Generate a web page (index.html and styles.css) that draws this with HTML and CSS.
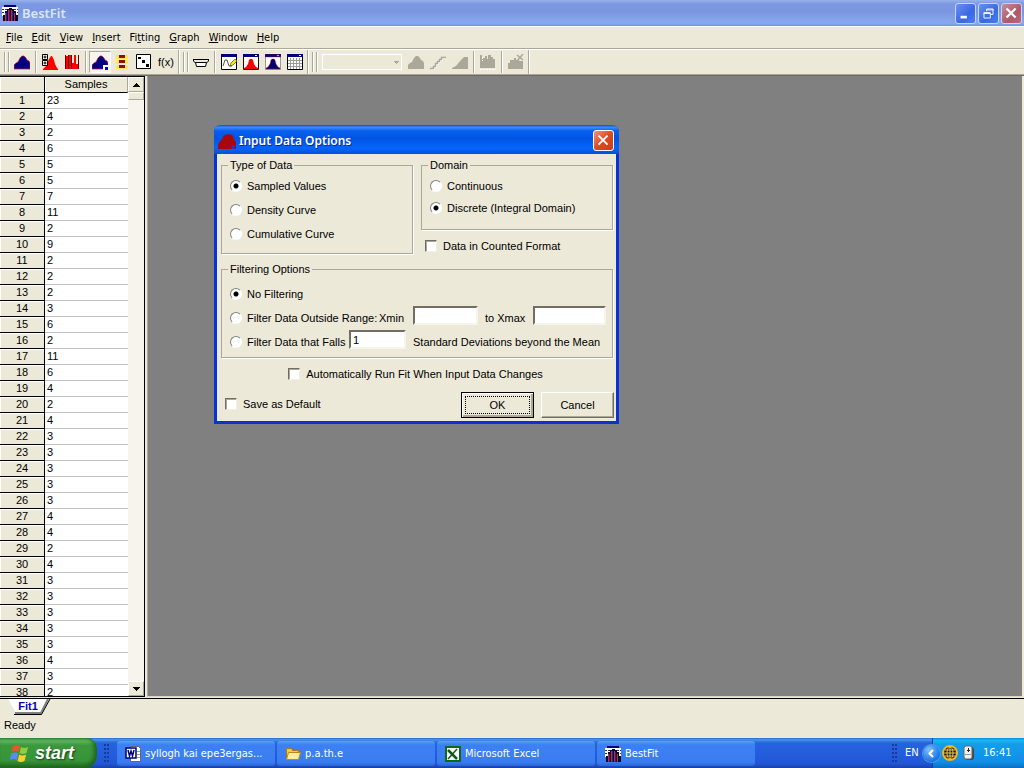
FILE: index.html
```html
<!DOCTYPE html>
<html lang="en">
<head>
<meta charset="utf-8">
<title>BestFit</title>
<link rel="stylesheet" href="styles.css">
</head>
<body>
<svg class="defs" aria-hidden="true">
  <defs>
    <symbol id="app" viewBox="0 0 16 16"><path fill="#fff" d="M0 2h16v9H0z"/><path fill="#00007c" d="M2 0h12v2H2z"/><path stroke="#222b70" stroke-dasharray="2 1" d="M0 4.500h16M0 7.500h16"/><path fill="#080828" d="M1 16v-6h2V6h2V4h2V3h3v1h2v2h2v4h2v6z"/><path fill="#e01c30" d="M3 8h1v8H3zM6 5h1v11H6zM9 5h1v11H9zM12 8h1v8h-1z"/><path fill="#22229c" d="M4 8h1v8H4zM7 5h1v11H7zM10 6h1v10h-1z"/></symbol>
    <symbol id="hill" viewBox="0 0 16 16"><path d="M0 15v-4l2-2 2-1 2-4 2-2h2l2 2 1 2 2 1 1 2v6z"/></symbol>
    <symbol id="bell" viewBox="0 0 16 16"><path fill="#fff" stroke="#111" d="M.5 1.500h15v14H.5z"/><path fill="#00007c" d="M0 0h16v3H0z"/><path fill="#fff" d="M12 1h2v1h-2z"/><path d="M1 15v-1l2-1 2-3 1-4 1-1h2l1 1 1 4 2 3 2 1v1z"/></symbol>
  </defs>
</svg>

<header class="titlebar">
  <svg class="i16"><use href="#app"/></svg>
  <h1>BestFit</h1>
  <button class="cap" aria-label="Minimize"><svg viewBox="0 0 21 21"><path fill="#fff" d="M5 13h7v3H5z"/></svg></button>
  <button class="cap" aria-label="Restore"><svg viewBox="0 0 21 21"><path fill="none" stroke="#fff" d="M8.500 8V5.500h7v6H13M8 6.500h8M5.500 9.500h7v6h-7zM5 10.500h8"/></svg></button>
  <button class="cap faded" aria-label="Close"><svg viewBox="0 0 21 21"><path stroke="#fff" stroke-width="2.500" d="M5 5l10 10M15 5L5 15"/></svg></button>
</header>

<nav class="menubar">
  <button><u>F</u>ile</button><button><u>E</u>dit</button><button><u>V</u>iew</button><button><u>I</u>nsert</button><button>Fi<u>t</u>ting</button><button><u>G</u>raph</button><button><u>W</u>indow</button><button><u>H</u>elp</button>
</nav>

<div class="toolbar">
  <div class="group">
    <i class="handle"></i>
    <button aria-label="Input data"><svg class="i16" fill="#000084" stroke="#d01830" stroke-width=".7"><use href="#hill"/></svg></button>
    <i class="sep"></i>
    <button aria-label="Run fit options"><svg class="i16" viewBox="0 0 16 16"><path fill="#f00" d="M1 16v-1l3-3 3-7 2-3h1l2 4 1 4 2 4 1 1v1z"/><path fill="#fff" stroke="#000" d="M.5.500h5v5h-5zM.5 6.500h5v5h-5z"/><circle cx="3" cy="3" r="1" fill="none" stroke="#000"/><circle cx="3" cy="9" r="1" fill="none" stroke="#000"/></svg></button>
    <button aria-label="Fit results"><svg class="i16" viewBox="0 0 16 16"><path fill="#f00" d="M1 2h3V1h4v8h2V1h2v9h3v5H1z"/><path stroke="#700000" d="M1.500 1v14M4.500 1v14M7.500 1v14M14.500 1v14"/></svg></button>
    <i class="sep"></i>
    <button class="down" aria-label="Input data options"><svg class="i16" viewBox="0 0 16 16"><use href="#hill" fill="#000084" stroke="#d01830" stroke-width=".7"/><path fill="#fff" d="M11 11h5v5h-5z"/><path fill="#0000d0" d="M13 13h3v3h-3z"/></svg></button>
    <button aria-label="Distributions"><svg class="i16" viewBox="0 0 16 16"><path fill="#ffe65c" d="M2 1h12v4H2zM2 6h12v4H2zM2 11h12v4H2z"/><path fill="#8c1010" d="M5 1h6v3H5zM5 6h6v3H5zM5 11h6v3H5z"/></svg></button>
    <button aria-label="Random sample"><svg class="i16" viewBox="0 0 16 16"><path fill="#fff" stroke="#000" d="M.5.500h14v14H.5z"/><path d="M2 3h3v2H2zM6 6h3v3H6zM10 10h3v3h-3z"/></svg></button>
    <button class="fx" aria-label="Function">f(x)</button>
  </div>
  <div class="group">
    <i class="handle"></i>
    <button aria-label="Flip"><svg class="i16" viewBox="0 0 16 16"><path fill="none" stroke="#000" d="M0 5.500h16M.5 5v2l2 2M15.500 5v2l-2 2"/><path fill="#fff" stroke="#000" d="M3.500 12.500L2.500 8.500h11l-1 4z"/></svg></button>
    <i class="sep"></i>
    <button aria-label="Edit graph"><svg class="i16" viewBox="0 0 16 16"><path fill="#fff" stroke="#000" d="M.5 1.500h15v14H.5z"/><path fill="#00007c" d="M0 0h16v3H0z"/><path fill="none" stroke="#555" d="M2 12l2-6h2l2 6h3"/><path fill="#ffe600" stroke="#333" stroke-width=".6" d="M9 12l1-3 4-4 2 2-4 4z"/></svg></button>
    <button aria-label="Red graph"><svg class="i16" fill="#f00"><use href="#bell"/></svg></button>
    <button aria-label="Blue graph"><svg class="i16" fill="#000070" stroke="#c01838" stroke-width=".4"><use href="#bell"/></svg></button>
    <button aria-label="Grid"><svg class="i16" viewBox="0 0 16 16"><path fill="#fff" stroke="#000" d="M.5 1.500h15v14H.5z"/><path stroke="#9a9a9a" d="M3.500 4v11M6.500 4v11M9.500 4v11M12.500 4v11M1 6.500h14M1 9.500h14M1 12.500h14"/><path fill="#00007c" d="M0 0h16v3H0z"/><path fill="#fff" d="M12 1h2v1h-2z"/></svg></button>
  </div>
  <div class="group">
    <i class="handle"></i>
    <select class="combo" aria-label="Distribution" disabled><option></option></select>
    <button disabled aria-label="Density"><svg class="i16" fill="#aca899"><use href="#hill"/></svg></button>
    <button disabled aria-label="Line"><svg class="i16" viewBox="0 0 16 16"><path fill="none" stroke="#fff" d="M1 15.500h3.500v-2h2v-3h2v-2h2v-2h2v-2H16"/><path fill="none" stroke="#aca899" stroke-width="1.500" d="M0 14.500h3.500v-2h2v-3h2v-2h2v-2h2v-2H16"/></svg></button>
    <button disabled aria-label="Cumulative"><svg class="i16" viewBox="0 0 16 16"><path fill="#aca899" d="M0 15v-1l4-2 5-6 3-3h4v12z"/></svg></button>
    <i class="sep"></i>
    <button disabled aria-label="Comparison"><svg class="i16" viewBox="0 0 16 16"><path fill="#aca899" d="M0 14V1h2v4h1V4h2V2h2v3h1V1h3v2h2v2h2v9z"/><path stroke="#fff" stroke-dasharray="2 1" d="M0 15.500h16M2.500 3v4"/></svg></button>
    <i class="sep"></i>
    <button disabled aria-label="Clear"><svg class="i16" viewBox="0 0 16 16"><path fill="#aca899" d="M0 15V9h2V6h4V4h2v2h2l2 1h3v8z"/><path stroke="#aca899" stroke-width="1.500" d="M9 1l6 5M15 0L9 7"/></svg></button>
  </div>
</div>

<main class="workspace">
  <section class="sheet">
    <div class="rows">
      <table>
        <thead><tr><th class="corner"></th><th>Samples</th></tr></thead>
        <tbody>
          <tr><th>1</th><td>23</td></tr>
          <tr><th>2</th><td>4</td></tr>
          <tr><th>3</th><td>2</td></tr>
          <tr><th>4</th><td>6</td></tr>
          <tr><th>5</th><td>5</td></tr>
          <tr><th>6</th><td>5</td></tr>
          <tr><th>7</th><td>7</td></tr>
          <tr><th>8</th><td>11</td></tr>
          <tr><th>9</th><td>2</td></tr>
          <tr><th>10</th><td>9</td></tr>
          <tr><th>11</th><td>2</td></tr>
          <tr><th>12</th><td>2</td></tr>
          <tr><th>13</th><td>2</td></tr>
          <tr><th>14</th><td>3</td></tr>
          <tr><th>15</th><td>6</td></tr>
          <tr><th>16</th><td>2</td></tr>
          <tr><th>17</th><td>11</td></tr>
          <tr><th>18</th><td>6</td></tr>
          <tr><th>19</th><td>4</td></tr>
          <tr><th>20</th><td>2</td></tr>
          <tr><th>21</th><td>4</td></tr>
          <tr><th>22</th><td>3</td></tr>
          <tr><th>23</th><td>3</td></tr>
          <tr><th>24</th><td>3</td></tr>
          <tr><th>25</th><td>3</td></tr>
          <tr><th>26</th><td>3</td></tr>
          <tr><th>27</th><td>4</td></tr>
          <tr><th>28</th><td>4</td></tr>
          <tr><th>29</th><td>2</td></tr>
          <tr><th>30</th><td>4</td></tr>
          <tr><th>31</th><td>3</td></tr>
          <tr><th>32</th><td>3</td></tr>
          <tr><th>33</th><td>3</td></tr>
          <tr><th>34</th><td>3</td></tr>
          <tr><th>35</th><td>3</td></tr>
          <tr><th>36</th><td>4</td></tr>
          <tr><th>37</th><td>3</td></tr>
          <tr><th>38</th><td>2</td></tr>
        </tbody>
      </table>
    </div>
    <div class="scrollbar">
      <button aria-label="Scroll up"><svg viewBox="0 0 7 4"><path d="M3 0h1v1h1v1h1v1h1v1H0V3h1V2h1V1h1z"/></svg></button>
      <div class="thumb"></div>
      <button class="last" aria-label="Scroll down"><svg viewBox="0 0 7 4"><path d="M0 0h7v1H6v1H5v1H4v1H3V3H2V2H1V1H0z"/></svg></button>
    </div>
  </section>

  <div class="desk">
    <form class="dialog" role="dialog" aria-labelledby="dlg">
      <div class="dialog-title">
        <svg class="i18" viewBox="0 0 16 16"><path fill="#a8080c" d="M0 15v-4l2-3 2-2 1-3 3-1h3l2 1 1 3 2 3v6z"/><path fill="#1c3cd8" d="M12 12h3v3h-3z"/></svg>
        <h2 id="dlg">Input Data Options</h2>
        <button type="button" class="cap red" aria-label="Close"><svg viewBox="0 0 21 21"><path stroke="#fff" stroke-width="2" d="M5 5l10 10M15 5L5 15"/></svg></button>
      </div>
      <div class="dialog-body">
        <div class="top">
          <fieldset class="type">
            <legend>Type of Data</legend>
            <label class="row"><input type="radio" name="type" checked>Sampled Values</label>
            <label class="row"><input type="radio" name="type">Density Curve</label>
            <label class="row"><input type="radio" name="type">Cumulative Curve</label>
          </fieldset>
          <div class="col">
            <fieldset class="domain">
              <legend>Domain</legend>
              <label class="row"><input type="radio" name="domain">Continuous</label>
              <label class="row"><input type="radio" name="domain" checked>Discrete (Integral Domain)</label>
            </fieldset>
            <label class="row check"><input type="checkbox">Data in Counted Format</label>
          </div>
        </div>
        <fieldset class="filter">
          <legend>Filtering Options</legend>
          <label class="row"><input type="radio" name="filter" checked>No Filtering</label>
          <div class="row">
            <label class="row range"><input type="radio" name="filter">Filter Data Outside Range:</label>
            <label for="xmin" class="xmin">Xmin</label><input type="text" id="xmin">
            <label for="xmax" class="xmax">to Xmax</label><input type="text" id="xmax" class="wide">
          </div>
          <div class="row">
            <label class="row falls"><input type="radio" name="filter">Filter Data that Falls</label>
            <input type="text" id="dev" class="dev" value="1"><label for="dev">Standard Deviations beyond the Mean</label>
          </div>
        </fieldset>
        <label class="row auto"><input type="checkbox">Automatically Run Fit When Input Data Changes</label>
        <div class="actions">
          <label class="row check"><input type="checkbox">Save as Default</label>
          <button type="button" class="push default"><span>OK</span></button>
          <button type="button" class="push">Cancel</button>
        </div>
      </div>
    </form>
  </div>
</main>

<div class="tabs">
  <button class="tab"><svg viewBox="0 0 52 17"><path fill="#fff" d="M8 0l8 14h25l8-14z"/><path fill="none" stroke="#808080" stroke-width="2" d="M15 14h26L48 0"/><path fill="none" stroke="#000" d="M14 15.500h27.500L50 0"/></svg><span>Fit1</span></button>
</div>
<div class="status">Ready</div>

<footer class="taskbar">
  <button class="start"><svg viewBox="0 0 20 20"><path fill="#e8562a" d="M3 3q4-2 7 0L8.500 9q-3-2-7 0z"/><path fill="#8ccf3c" d="M11 4q3 2 7 0l-1.500 6q-4 2-7 0z"/><path fill="#5a8cf0" d="M1.200 10.500q4-2 7 0L6.700 17q-3-2-7 0z"/><path fill="#fcd02c" d="M9.200 11.500q3 2 7 0L14.500 18q-4 2-7 0z"/></svg>start</button>
  <i class="grip"></i>
  <div class="tasks">
    <button><svg class="i16" viewBox="0 0 16 16"><path fill="#fff" stroke="#667" d="M5.500.500h8l2 2v13h-10z"/><path stroke="#99a" d="M12 5.500h3M12 8.500h3M12 11.500h3"/><path fill="#fff" stroke="#000078" stroke-width="1.500" d="M1 2h10v10H1z"/><path fill="none" stroke="#000078" stroke-width="1.500" d="M3 4l1.500 6L6 5l1.500 5L9 4"/></svg><span>syllogh kai epe3ergas...</span></button>
    <button><svg class="i16" viewBox="0 0 16 16"><path fill="#f3c84c" stroke="#a87c14" d="M1.500 13.500v-11h5l1 2h6v3"/><path fill="#ffec9c" stroke="#b88a1c" d="M1.500 13.500l2-7h12l-2 7z"/></svg><span>p.a.th.e</span></button>
    <button><svg class="i16" viewBox="0 0 16 16"><path fill="#0c6a1c" d="M0 0h16v16H0z"/><path fill="#fff" d="M2 2h12v12H2z"/><path stroke="#0c5a1c" stroke-width="2.500" d="M3 4l9 9"/><path stroke="#0c5a1c" stroke-width="1.500" d="M12 3l-9 10"/></svg><span>Microsoft Excel</span></button>
    <button><svg class="i16"><use href="#app"/></svg><span>BestFit</span></button>
  </div>
  <i class="grip"></i>
  <span class="lang">EN</span>
  <div class="tray">
    <button class="chev" aria-label="Show hidden icons"><svg viewBox="0 0 17 17"><path fill="none" stroke="#fff" stroke-width="2" d="M10 5L6.500 8.500 10 12"/></svg></button>
    <svg class="i16" viewBox="0 0 16 16"><circle cx="8" cy="8" r="7" fill="#111" stroke="#f0b428" stroke-width="2"/><path fill="none" stroke="#f4c850" d="M2 8h12M3 5h10M3 11h10M8 2v12"/><ellipse cx="8" cy="8" rx="3" ry="6" fill="none" stroke="#f4c850"/></svg>
    <svg class="i16" viewBox="0 0 16 16"><rect x="5" y="2" width="9" height="13" rx="3" fill="#444"/><rect x="4" y="1" width="8" height="13" rx="2" fill="#eee" stroke="#666"/><path stroke="#222" d="M8.500 3v4M7 5.500h3"/><path stroke="#999" d="M5 9.500h6"/></svg>
    <time>16:41</time>
  </div>
</footer>
</body>
</html>
```

FILE: styles.css
```css
* { box-sizing: border-box; }

body {
  margin: 0;
  height: 100vh;
  display: flex;
  flex-direction: column;
  overflow: hidden;
  background: #ece9d8;
  color: #000;
  font: 11px/14px "Liberation Sans", Arial, sans-serif;
}

button { font: inherit; color: inherit; margin: 0; padding: 0; border: 0; background: none; }
svg { display: block; flex: none; }
h1, h2 { margin: 0; flex: 1; font: 600 13px/20px "Noto Sans", "Open Sans", sans-serif; }
.defs { position: absolute; width: 0; height: 0; }
.i16 { width: 16px; height: 16px; }
.i18 { width: 18px; height: 18px; }

/* Title bar */
.titlebar {
  display: flex;
  align-items: center;
  gap: 2px;
  height: 26px;
  flex: none;
  padding: 0 2px;
  background: linear-gradient(#98b2ee 0, #7c98e2 15%, #7a96df 45%, #84a5ea 75%, #86a8ee 90%, #7490dc);
}
.titlebar h1 { padding-left: 2px; color: #dce6fa; }
.cap {
  width: 21px;
  height: 21px;
  flex: none;
  border: 1px solid #c4d4f8;
  border-radius: 3px;
  background: linear-gradient(135deg, #6a90f0, #3a68e4 60%, #4c7cf0);
}
.cap svg { width: 19px; height: 19px; }
.cap.faded { background: linear-gradient(135deg, #c88c98, #b05868 60%, #bc6878); }
.cap.red { border-color: #fff; background: linear-gradient(135deg, #f09478, #dc4c24 50%, #c83c14); }

/* Menu */
.menubar {
  display: flex;
  gap: 9px;
  flex: none;
  height: 23px;
  padding: 1px 6px 0;
  border-top: 1px solid #fff;
  border-bottom: 1px solid #aca899;
  font: 11px/20px "DejaVu Sans Condensed", "DejaVu Sans", sans-serif;
}

/* Toolbar */
.toolbar { display: flex; flex: none; height: 26px; border-top: 1px solid #fff; border-bottom: 1px solid #aca899; }
.group {
  display: flex;
  align-items: center;
  padding: 0 1px 0 4px;
  border-right: 1px solid #aca899;
  box-shadow: 1px 0 #fff;
}
.group button { display: grid; place-items: center; width: 22px; height: 22px; }
.group .down { background: #f6f4ec; border: 1px solid; border-color: #aca899 #fff #fff #aca899; }
.handle {
  width: 5px;
  height: 20px;
  margin-right: 2px;
  border: solid #aca899;
  border-width: 0 1px;
  box-shadow: inset 1px 0 #fff, 1px 0 #fff;
}
.sep { width: 2px; height: 22px; margin: 0 2px; border-left: 1px solid #aca899; border-right: 1px solid #fff; }
.combo {
  appearance: none;
  width: 80px;
  height: 16px;
  margin: 0 3px;
  border: 1px solid #fff;
  border-radius: 0;
  opacity: 1;
  background: linear-gradient(#aca899, #aca899) 71px 6px / 5px 1px no-repeat, linear-gradient(#aca899, #aca899) 72px 7px / 3px 1px no-repeat, linear-gradient(#aca899, #aca899) 73px 8px / 1px 1px no-repeat, #ece9d8;
}

/* Workspace */
.workspace { display: flex; flex: 1; min-height: 0; border-top: 1px solid #6c6a60; }
.sheet { display: flex; width: 145px; flex: none; border: 1px solid #000; border-left: 0; }
.rows { flex: 1; min-width: 0; overflow: hidden; }
table { width: 100%; table-layout: fixed; border-collapse: separate; border-spacing: 0; }
th, td { height: 16px; padding: 0; line-height: 15px; font-weight: normal; }
th { border-right: 1px solid #000; border-bottom: 1px solid #000; background: #ece9d8; box-shadow: inset 1px 1px #fff; }
thead th { border-right-color: #aca899; }
thead .corner { width: 45px; border-right-color: #000; }
td { padding-left: 2px; background: #fff; border-bottom: 1px solid #c0c0c0; }

.scrollbar { display: flex; flex-direction: column; width: 16px; background: #f6f4ec; }
.scrollbar button, .thumb {
  display: grid;
  place-items: center;
  height: 15px;
  background: #ece9d8;
  border: 1px solid;
  border-color: #fff #aca899 #aca899 #fff;
}
.scrollbar svg { width: 7px; height: 4px; }
.scrollbar .thumb { height: 8px; }
.scrollbar .last { margin-top: auto; }
.desk {
  position: relative;
  flex: 1;
  margin: 0 2px;
  background: #808080;
  border-left: 1px solid #aca899;
  border-bottom: 1px solid #d8d4c4;
}

/* Dialog */
.dialog {
  position: absolute;
  left: 66px;
  top: 49px;
  width: 405px;
  background: #ece9d8;
  border: 3px solid #0831d9;
  border-top: 0;
  border-radius: 7px 7px 0 0;
}
.dialog-title {
  display: flex;
  align-items: center;
  gap: 3px;
  height: 29px;
  margin: 0 -3px;
  padding: 2px 5px 0 4px;
  border-radius: 7px 7px 0 0;
  background: linear-gradient(#0a4fd0 0, #3c8cf8 8%, #0860f0 20%, #0054e3 45%, #0564fc 80%, #0350d8);
}
.dialog-title h2 { color: #fff; font-size: 12px; text-shadow: 1px 1px #0a2a90; }
.dialog-body { padding: 4px 2px 2px 4px; }
.top { display: grid; grid-template-columns: 1fr 1fr; gap: 8px; padding-right: 1px; }
fieldset {
  margin: 0;
  min-width: 0;
  padding: 2px 6px 6px 8px;
  border: 1px solid #aca899;
  box-shadow: 1px 1px #fff;
}
legend { padding: 0 2px; margin-left: -2px; }
.row { display: flex; align-items: center; height: 24px; white-space: nowrap; }
.type { padding-bottom: 2px; }
.domain { padding-top: 3px; padding-bottom: 10px; }
.domain .row { height: 22px; }
.check { padding-left: 4px; }
.col .check { height: 16px; margin-top: 8px; }
.filter { margin: 8px 1px 0 0; padding-top: 6px; padding-bottom: 3px; }
.auto { justify-content: center; margin: 4px 4px 0 0; }
.range { width: 149px; }
.falls { width: 119px; }
.xmin { width: 34px; }
.xmax { width: 48px; }

input[type="radio"] {
  appearance: none;
  width: 12px;
  height: 12px;
  margin: 0 5px 0 0;
  flex: none;
  border: 1px solid;
  border-color: #808080 #fff #fff #808080;
  border-radius: 50%;
  background: #fff;
}
input[type="radio"]:checked { background: radial-gradient(circle, #000 2px, #fff 3px); }
input[type="checkbox"] {
  appearance: none;
  width: 12px;
  height: 12px;
  margin: 0 6px 0 0;
  flex: none;
  background: #fff;
  border: 1px solid;
  border-color: #716f64 #f1efe2 #f1efe2 #716f64;
  box-shadow: inset 1px 1px #aca899;
}
input[type="text"] {
  align-self: flex-start;
  width: 65px;
  height: 19px;
  margin: 0 7px 0 0;
  padding: 0 2px;
  border: 2px solid;
  border-color: #716f64 #f6f4ec #f6f4ec #716f64;
  border-radius: 0;
  background: #fff;
  font: inherit;
}
input[type="text"].wide { width: 73px; margin: 0; }
input[type="text"].dev { width: 57px; }

.actions { display: flex; align-items: flex-start; gap: 7px; height: 27px; margin-top: 6px; }
.actions .check { flex: 1; }
.push {
  width: 73px;
  height: 26px;
  border: 1px solid;
  border-color: #fff #716f64 #716f64 #fff;
  box-shadow: inset -1px -1px #aca899;
}
.push.default { padding: 3px; border-color: #000; box-shadow: inset 1px 1px #fff, inset -2px -2px #aca899; }
.push.default span { display: block; border: 1px dotted #000; line-height: 16px; }

/* Sheet tabs and status */
.tabs { flex: none; height: 17px; margin-top: 1px; border-top: 1px solid #000; }
.tab { position: relative; width: 52px; height: 16px; padding: 0 0 4px 4px; color: #0000c8; font-weight: bold; line-height: 12px; }
.tab svg { position: absolute; left: 0; top: -1px; width: 52px; height: 17px; }
.tab span { position: relative; }
.status { flex: none; height: 23px; padding: 3px 4px; }

/* Taskbar */
.taskbar {
  display: flex;
  align-items: stretch;
  flex: none;
  height: 30px;
  color: #fff;
  background: linear-gradient(#3168d5 0, #4993e6 6%, #2663e0 16%, #245ddb 50%, #2157d7 85%, #1941a5);
  font: 11px/14px "DejaVu Sans Condensed", "DejaVu Sans", sans-serif;
}
.start {
  display: flex;
  align-items: center;
  gap: 5px;
  width: 97px;
  padding: 0 0 1px 10px;
  border-radius: 0 10px 12px 0;
  background: linear-gradient(#388838 0, #60b060 10%, #3c983c 25%, #389438 75%, #287028);
  box-shadow: inset -3px -2px 4px #1c641c;
  font: italic bold 18px/24px "Liberation Sans", Arial, sans-serif;
  text-shadow: 1px 1px 2px #123c12;
}
.start svg { width: 20px; height: 20px; }
.grip { width: 6px; margin: 6px 7px 4px; background: radial-gradient(circle at 1px 1px, #143c9c 1px, transparent 1px) 0 0 / 3px 4px; }
.tasks { display: flex; flex: 1; gap: 2px; padding-top: 3px; min-width: 0; }
.tasks button {
  display: flex;
  align-items: center;
  gap: 4px;
  width: 158px;
  height: 25px;
  padding-left: 8px;
  border-radius: 3px;
  background: linear-gradient(#5c9cfa 0, #3c81f3 15%, #3a7cf0 85%, #2c64d4);
  white-space: nowrap;
}
.lang { width: 27px; align-self: center; }
.tray {
  display: flex;
  align-items: center;
  gap: 2px;
  width: 92px;
  border-left: 1px solid #1042af;
  background: linear-gradient(#0c8ddf 0, #18b8f6 8%, #139ee9 20%, #118ee8 80%, #0c6cc0);
}
.chev { width: 17px; height: 17px; margin-left: -10px; border-radius: 50%; background: radial-gradient(circle at 6px 5px, #7cc0fc, #1c74e4 70%); box-shadow: 0 0 0 1px #4c98ec; }
.chev svg { width: 17px; height: 17px; }
.tray time { margin-left: 5px; }
```
